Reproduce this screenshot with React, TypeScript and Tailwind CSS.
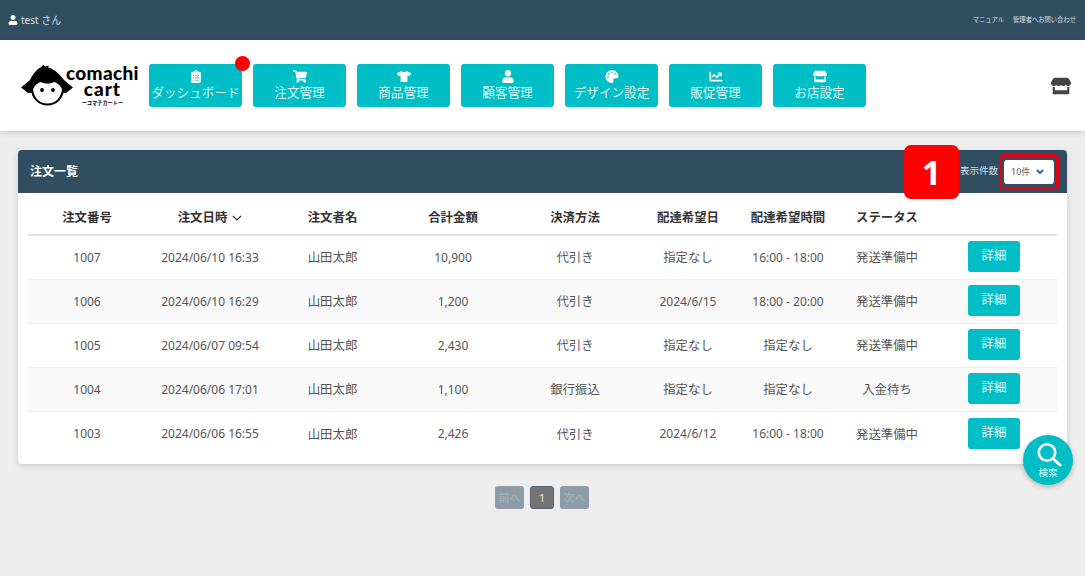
import type { ComponentType } from "react";
import {
  FaChartLine,
  FaClipboardList,
  FaPalette,
  FaShoppingCart,
  FaStore,
  FaTshirt,
  FaUser,
} from "react-icons/fa";

const FONT = "font-['Noto_Sans','Noto_Sans_CJK_JP',sans-serif]";

const NAV: { label: string; icon: ComponentType<{ className?: string }>; dot?: boolean }[] = [
  { label: "ダッシュボード", icon: FaClipboardList, dot: true },
  { label: "注文管理", icon: FaShoppingCart },
  { label: "商品管理", icon: FaTshirt },
  { label: "顧客管理", icon: FaUser },
  { label: "デザイン設定", icon: FaPalette },
  { label: "販促管理", icon: FaChartLine },
  { label: "お店設定", icon: FaStore },
];

const COLS = "grid grid-cols-[113px_138px_107px_134px_110px_116px_84px_114px_113px]";

const HEAD = ["注文番号", "注文日時", "注文者名", "合計金額", "決済方法", "配達希望日", "配達希望時間", "ステータス", ""];

const ROWS = [
  ["1007", "2024/06/10 16:33", "山田太郎", "10,900", "代引き", "指定なし", "16:00 - 18:00", "発送準備中"],
  ["1006", "2024/06/10 16:29", "山田太郎", "1,200", "代引き", "2024/6/15", "18:00 - 20:00", "発送準備中"],
  ["1005", "2024/06/07 09:54", "山田太郎", "2,430", "代引き", "指定なし", "指定なし", "発送準備中"],
  ["1004", "2024/06/06 17:01", "山田太郎", "1,100", "銀行振込", "指定なし", "指定なし", "入金待ち"],
  ["1003", "2024/06/06 16:55", "山田太郎", "2,426", "代引き", "2024/6/12", "16:00 - 18:00", "発送準備中"],
];

function Logo() {
  return (
    <div className="flex w-[128px] shrink-0 items-start">
      <svg viewBox="0 0 54 42" className="-ml-[1px] h-[42px] w-[54px] shrink-0">
        <path d="M21 3 L23.5 1 L25 2.5 L29 1.5 L28 3.5 C35 5 40 11 44 16 L53 23.5 L46 29 L8 29 L1 23.5 L10 16 C13 10 17 5 21 3 Z" fill="#000" />
        <circle cx="27.5" cy="25" r="16.5" fill="#000" />
        <path d="M13 25 C15 21 18 18.5 21 18 C25 20 30 20 34 18 C37 18.5 40 21 42 25 C41.5 33.5 35.5 39.5 27.5 39.5 C19.5 39.5 13.5 33.5 13 25 Z" fill="#fff" />
        <circle cx="22" cy="26" r="1.9" fill="#000" />
        <circle cx="33" cy="26" r="1.9" fill="#000" />
      </svg>
      <div className="ml-[-8px] flex flex-col items-center font-['Lato',sans-serif] text-black">
        <span className="text-[19px] leading-[17px] font-black tracking-[0.3px]">comachi</span>
        <span className="text-[19px] leading-[15px] font-black tracking-[1px]">cart</span>
        <span className="mt-[3px] font-['Noto_Sans_CJK_JP',sans-serif] text-[5.2px] leading-[8px] font-bold whitespace-nowrap">ーコマチカートー</span>
      </div>
    </div>
  );
}

function NavButton({ label, icon: Icon, dot }: (typeof NAV)[number]) {
  return (
    <div className="relative flex h-[43px] w-[93px] flex-col items-center rounded-[3px] bg-[#00bec5] pt-[6px] text-[#dff6f6]">
      <Icon className="h-[13px] w-[14px] text-white" />
      <span className="mt-[1px] text-[12.6px] leading-[18px] whitespace-nowrap">{label}</span>
      {dot && <span className="absolute -top-[8px] -right-[8px] h-[15px] w-[15px] rounded-full bg-[#ff0000]" />}
    </div>
  );
}

export default function App() {
  return (
    <div className={`relative h-[576px] w-[1085px] overflow-hidden bg-[#eeeeee] ${FONT}`}>
      {/* top bar */}
      <div className="flex h-10 items-center justify-between bg-[#314d60] pr-[9px] pl-[8px] text-[#d9e0e4]">
        <div className="flex items-center gap-[3px] text-[10px]">
          <FaUser className="h-[10px] w-[10px] text-white" />
          <span>test さん</span>
        </div>
        <div className="flex gap-[9px] text-[6.3px]">
          <span>マニュアル</span>
          <span>管理者へお問い合わせ</span>
        </div>
      </div>

      {/* header */}
      <div className="flex h-[91px] items-center bg-white pr-[14px] pl-[21px] shadow-[0_2px_6px_rgba(0,0,0,0.15)]">
        <Logo />
        <div className="flex gap-[11px]">
          {NAV.map((n) => (
            <NavButton key={n.label} {...n} />
          ))}
        </div>
        <FaStore className="ml-auto h-[20px] w-[20px] text-[#444444]" />
      </div>

      {/* order list */}
      <div className="mx-[18px] mt-[19px] rounded-[4px] bg-white pb-2 shadow-[0_2px_6px_rgba(0,0,0,0.15)]">
        <div className="relative flex h-[43px] items-center justify-between rounded-t-[4px] bg-[#314d60] pr-[8px] pl-[12px]">
          <span className="text-[12px] font-bold text-white">注文一覧</span>
          <div className="flex items-center gap-[1px]">
            <span className="text-[9.5px] text-[#d9e0e4]">表示件数</span>
            <div className="rounded-[5px] border-[3px] border-[#e60012] px-[2px] py-[3px]">
              <div className="flex h-[24px] w-[50px] items-center justify-between rounded-[3px] bg-white pr-[10px] pl-[7px] text-[9px] text-[#666666]">
                <span>10件</span>
                <svg viewBox="0 0 8 6" className="h-[6px] w-[8px]" fill="none" stroke="#2563c9" strokeWidth="2">
                  <path d="M1 1l3 3 3-3" />
                </svg>
              </div>
            </div>
          </div>
          <div className="absolute -top-[5px] left-[886px] flex h-[54px] w-[55px] items-center justify-center rounded-[7px] bg-[#ff0000] text-[34px] leading-none font-bold text-white">
            1
          </div>
        </div>

        <div className="mx-[10px]">
          <div className={`${COLS} h-[43px] items-center border-b-2 border-[#e2e2e2] pt-[12px] pb-[2px] text-[12.4px] font-bold text-[#333333]`}>
            {HEAD.map((h, i) => (
              <div key={h || "action"} className={`flex items-center justify-center gap-[5px] ${i === 0 ? "pl-[5px]" : ""}`}>
                {h}
                {i === 1 && (
                  <svg viewBox="0 0 10 6" className="h-[6px] w-[10px]" fill="none" stroke="#333333" strokeWidth="1.2">
                    <path d="M1 1l4 4 4-4" />
                  </svg>
                )}
              </div>
            ))}
          </div>
          {ROWS.map((row, r) => (
            <div
              key={row[0]}
              className={`${COLS} h-[44px] items-center text-[#555555] ${r < 4 ? "border-b border-[#eeeeee]" : ""} ${r % 2 === 1 ? "bg-[#f9f9f9]" : "bg-white"}`}
            >
              {row.map((c, i) => (
                <div
                  key={i}
                  className={`text-center whitespace-nowrap ${/^[\d/:, -]+$/.test(c) ? "text-[12px]" : "pt-[2px] text-[12.4px]"} ${i === 0 ? "pl-[5px]" : ""}`}
                >
                  {c}
                </div>
              ))}
              <div className="flex justify-center pr-[13px] pb-[2px]">
                <div className="flex h-[31px] w-[52px] items-center justify-center rounded-[3px] bg-[#00bec5] text-[12.4px] text-[#e6f8f8]">
                  詳細
                </div>
              </div>
            </div>
          ))}
        </div>
      </div>

      {/* pagination */}
      <div className="mt-[22px] flex justify-center gap-[6px] pr-[1px] text-[11px] leading-none">
        <div className="flex h-[23px] w-[29px] items-center justify-center rounded-[3px] bg-[#8d9ca6] text-[#a6b2ba]">前へ</div>
        <div className="flex h-[23px] w-[24px] items-center justify-center rounded-[3px] border border-[#56646e] bg-[#747474] text-[10px] text-[#f0f0f0]">1</div>
        <div className="flex h-[23px] w-[29px] items-center justify-center rounded-[3px] bg-[#8d9ca6] text-[#a6b2ba]">次へ</div>
      </div>

      {/* search button */}
      <div className="absolute top-[435px] left-[1023px] flex h-[50px] w-[50px] flex-col items-center rounded-full bg-[#00bec5] pt-[7px] shadow-[0_2px_5px_rgba(0,0,0,0.25)]">
        <svg viewBox="0 0 26 26" className="ml-[2px] h-[26px] w-[26px]" fill="none" stroke="#ffffff">
          <circle cx="11" cy="10.5" r="8.2" strokeWidth="2.6" />
          <path d="M17 16.5l7 6.5" strokeWidth="3" strokeLinecap="round" />
        </svg>
        <span className="mt-[-1px] text-[9.5px] leading-[11px] text-[#e6f8f8]">検索</span>
      </div>
    </div>
  );
}
